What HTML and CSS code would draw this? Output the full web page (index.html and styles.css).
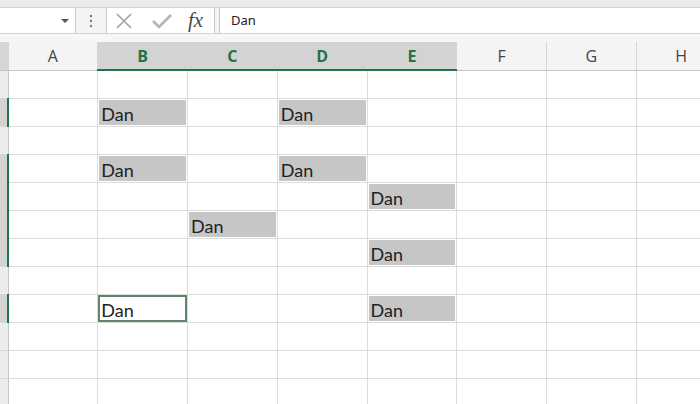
FILE: index.html
```html
<!DOCTYPE html>
<html lang="en">
<head>
  <meta charset="UTF-8">
  <title>Sheet</title>
  <link rel="stylesheet" href="styles.css">
</head>
<body>

  <div class="ribbon-edge"></div>

  <!-- Name box + formula bar -->
  <div class="formula-bar">
    <div class="name-box">
      <span class="drop"></span>
    </div>
    <div class="more">
      <svg width="4" height="14" viewBox="0 0 4 14"><circle cx="2" cy="2" r="1.2"/><circle cx="2" cy="7" r="1.2"/><circle cx="2" cy="12" r="1.2"/></svg>
    </div>
    <div class="fx-buttons">
      <svg class="icon-cancel" width="18" height="18" viewBox="0 0 18 18"><path d="M2 2 L16 16 M16 2 L2 16"/></svg>
      <svg class="icon-enter" width="22" height="18" viewBox="0 0 22 18"><path d="M2 9 L8 15 L20 3"/></svg>
      <span class="fx">fx</span>
    </div>
    <div class="formula-input">Dan</div>
  </div>
  <div class="bar-gap"></div>

  <!-- Worksheet -->
  <div class="sheet">
    <table class="grid">
      <colgroup>
        <col class="rowhead-col">
        <col><col><col><col><col><col><col><col>
      </colgroup>
      <tr class="head">
        <th class="corner"></th>
        <th>A</th>
        <th class="on">B</th>
        <th class="on">C</th>
        <th class="on">D</th>
        <th class="on">E</th>
        <th>F</th>
        <th>G</th>
        <th>H</th>
      </tr>
      <tr>
        <th class="rh"></th>
        <td></td><td></td><td></td><td></td><td></td><td></td><td></td><td></td>
      </tr>
      <tr>
        <th class="rh on"></th>
        <td></td><td class="sel"><div class="val">Dan</div></td><td></td><td class="sel"><div class="val">Dan</div></td><td></td><td></td><td></td><td></td>
      </tr>
      <tr>
        <th class="rh"></th>
        <td></td><td></td><td></td><td></td><td></td><td></td><td></td><td></td>
      </tr>
      <tr>
        <th class="rh on"></th>
        <td></td><td class="sel"><div class="val">Dan</div></td><td></td><td class="sel"><div class="val">Dan</div></td><td></td><td></td><td></td><td></td>
      </tr>
      <tr>
        <th class="rh on"></th>
        <td></td><td></td><td></td><td></td><td class="sel"><div class="val">Dan</div></td><td></td><td></td><td></td>
      </tr>
      <tr>
        <th class="rh on"></th>
        <td></td><td></td><td class="sel"><div class="val">Dan</div></td><td></td><td></td><td></td><td></td><td></td>
      </tr>
      <tr>
        <th class="rh on"></th>
        <td></td><td></td><td></td><td></td><td class="sel"><div class="val">Dan</div></td><td></td><td></td><td></td>
      </tr>
      <tr>
        <th class="rh"></th>
        <td></td><td></td><td></td><td></td><td></td><td></td><td></td><td></td>
      </tr>
      <tr>
        <th class="rh on"></th>
        <td></td><td class="active"><div class="val">Dan</div></td><td></td><td></td><td class="sel"><div class="val">Dan</div></td><td></td><td></td><td></td>
      </tr>
      <tr>
        <th class="rh"></th>
        <td></td><td></td><td></td><td></td><td></td><td></td><td></td><td></td>
      </tr>
      <tr>
        <th class="rh"></th>
        <td></td><td></td><td></td><td></td><td></td><td></td><td></td><td></td>
      </tr>
      <tr>
        <th class="rh"></th>
        <td></td><td></td><td></td><td></td><td></td><td></td><td></td><td></td>
      </tr>
    </table>
  </div>

</body>
</html>
```

FILE: styles.css
```css
* {
  box-sizing: border-box;
  margin: 0;
  padding: 0;
}
body {
  font-family: "Open Sans", Arial, sans-serif;
  background-color: #fff;
  width: 700px;
  height: 404px;
  overflow: hidden;
}

/* top strip + formula bar */
.ribbon-edge {
  height: 8px;
  background-color: #ececec;
  border-bottom: 1px solid #d2d2d2;
}
.formula-bar {
  display: flex;
  height: 26px;
  background-color: #f4f4f4;
  border-bottom: 1px solid #d2d2d2;
}
.name-box {
  width: 76px;
  background-color: #fff;
  border-right: 1px solid #c8c8c8;
  display: flex;
  align-items: center;
  justify-content: flex-end;
  padding-right: 6px;
}
.drop {
  width: 0;
  height: 0;
  border-left: 4px solid transparent;
  border-right: 4px solid transparent;
  border-top: 4px solid #555;
}
.more {
  width: 30px;
  display: flex;
  align-items: center;
  justify-content: center;
}
.more svg {
  fill: #7a7a7a;
}
.fx-buttons {
  width: 109px;
  background-color: #fff;
  border-left: 1px solid #c8c8c8;
  border-right: 1px solid #c8c8c8;
  display: flex;
  align-items: center;
  padding-left: 8px;
}
.icon-cancel {
  fill: none;
  stroke: #a2a2a2;
  stroke-width: 1.6;
}
.icon-enter {
  fill: none;
  stroke: #b4b4b4;
  stroke-width: 2.6;
  margin-left: 18px;
}
.fx {
  font-family: "Liberation Serif", "DejaVu Serif", serif;
  font-style: italic;
  font-size: 21px;
  color: #4a4a4a;
  margin-left: 15px;
  line-height: 1;
}
.formula-input {
  flex: 1;
  margin-left: 4px;
  background-color: #fff;
  border-left: 1px solid #c8c8c8;
  font-family: "Noto Sans", Arial, sans-serif;
  font-size: 13px;
  color: #222;
  padding-left: 11px;
  line-height: 24px;
}
.bar-gap {
  height: 8px;
  background-color: #f6f6f6;
}

/* worksheet grid */
.sheet {
  height: 362px;
  overflow: hidden;
}
.grid {
  border-collapse: collapse;
  table-layout: fixed;
  width: 726px;
}
.grid col {
  width: 89.75px;
}
.grid col.rowhead-col {
  width: 8px;
}
.grid tr {
  height: 28px;
}
.grid td {
  border: 1px solid #dcdcdc;
  padding: 1px;
  vertical-align: top;
}
.grid tr:first-child th,
.grid tr:first-child td {
  border-top: none;
}

.head th {
  background-color: #f4f4f4;
  border-right: 1px solid #d6d6d6;
  border-bottom: 1px solid #c4c4c4;
  font-family: "Open Sans", Arial, sans-serif;
  font-weight: normal;
  font-size: 16px;
  color: #454545;
  text-align: center;
  padding-top: 1px;
}
.head th.on {
  background-color: #d3d3d3;
  color: #217346;
  font-weight: bold;
  border-bottom: 2px solid #217346;
}
.head th.corner {
  background-color: #d6d6d6;
}

th.rh {
  background-color: #ececec;
  border-bottom: 1px solid #d6d6d6;
  border-right: 1px solid #c4c4c4;
}
th.rh.on {
  background-color: #d3d3d3;
  border-right: 2px solid #217346;
}

/* filled / active cells */
.val {
  height: 25px;
  font-family: Lato, "Open Sans", sans-serif;
  font-size: 18px;
  line-height: 24px;
  padding-top: 2px;
  padding-left: 2px;
  color: #222;
}
.sel .val {
  background-color: #c6c6c6;
}
td.active {
  padding: 0;
}
.active .val {
  height: 27px;
  border: 2px solid #5f8669;
  padding-left: 1px;
  padding-top: 1px;
}
```
